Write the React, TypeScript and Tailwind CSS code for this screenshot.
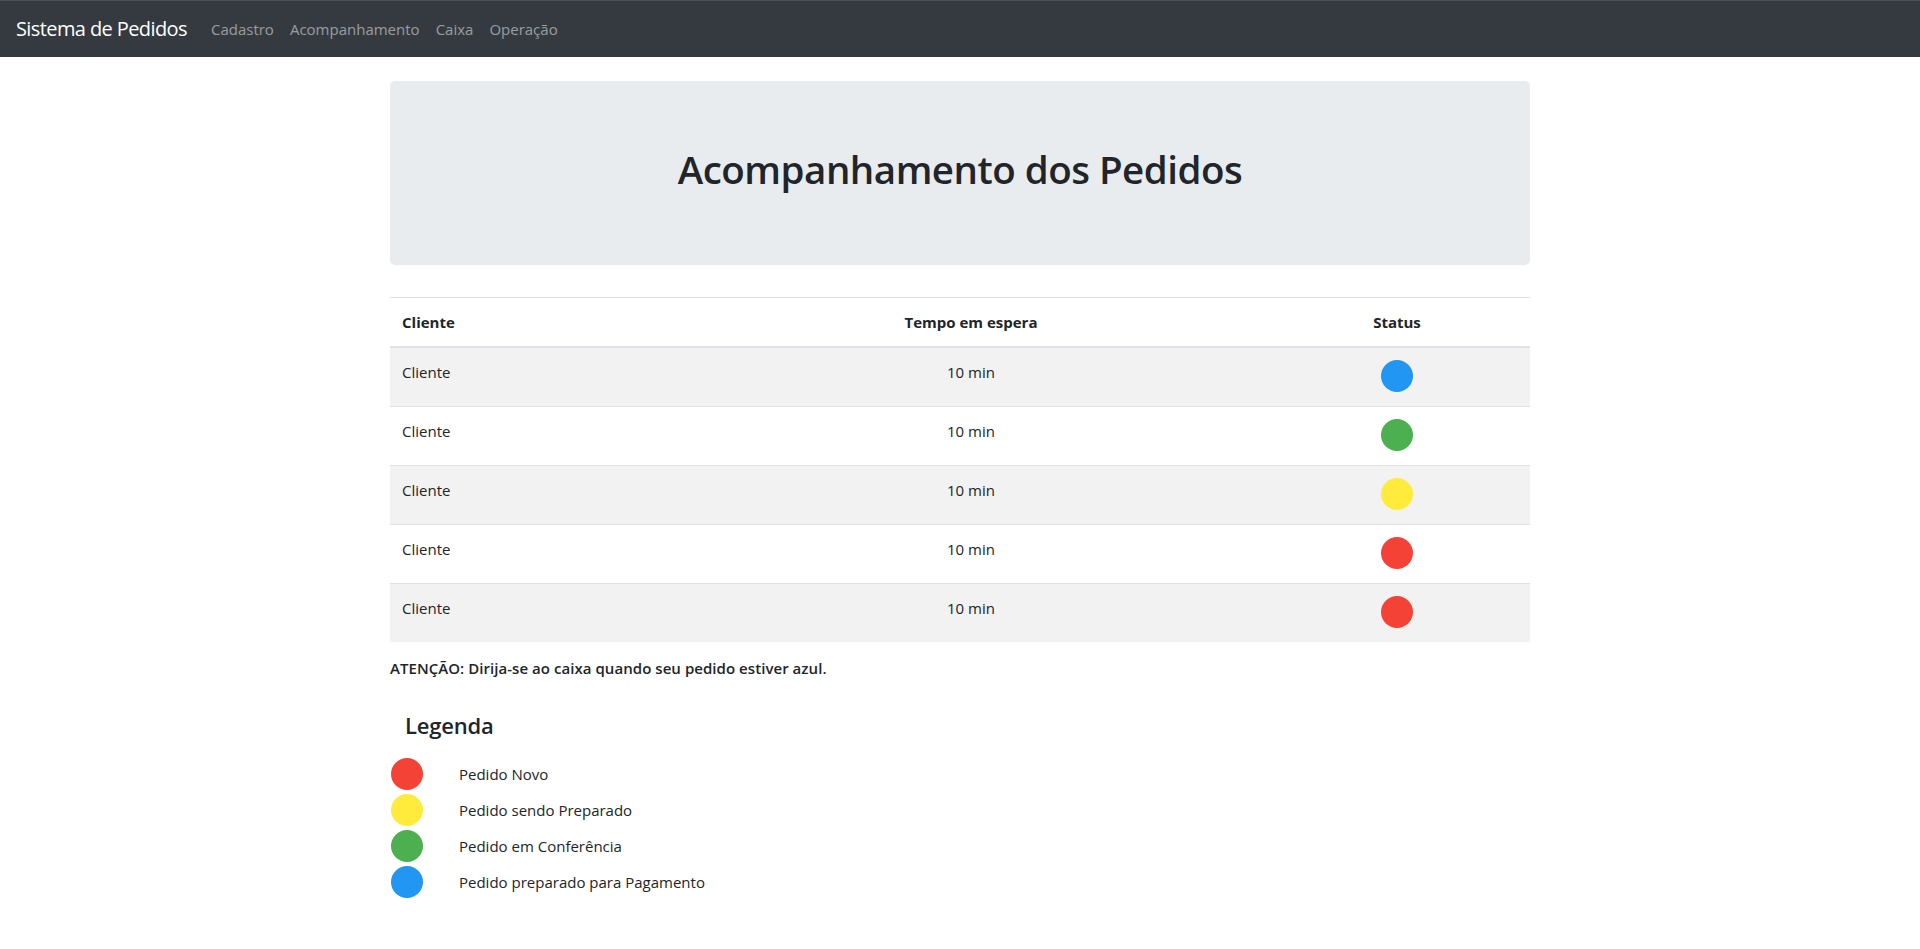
import React from "react";

const pedidos = [
  { cliente: "Cliente", tempo: "10 min", cor: "bg-[#2196f3]" },
  { cliente: "Cliente", tempo: "10 min", cor: "bg-[#4caf50]" },
  { cliente: "Cliente", tempo: "10 min", cor: "bg-[#ffeb3b]" },
  { cliente: "Cliente", tempo: "10 min", cor: "bg-[#f44336]" },
  { cliente: "Cliente", tempo: "10 min", cor: "bg-[#f44336]" },
];

const legenda = [
  { cor: "bg-[#f44336]", texto: "Pedido Novo" },
  { cor: "bg-[#ffeb3b]", texto: "Pedido sendo Preparado" },
  { cor: "bg-[#4caf50]", texto: "Pedido em Conferência" },
  { cor: "bg-[#2196f3]", texto: "Pedido preparado para Pagamento" },
];

const App = () => {
  return (
    <div className="min-h-screen bg-white text-[#212529] font-['Open_Sans',sans-serif]">
      {/* NAVBAR */}
      <nav className="h-[57px] bg-[#343a40] border-t border-[#4a4f55] flex items-center px-4">
        <span className="text-[20px] text-white mr-4 tracking-[-0.6px]">Sistema de Pedidos</span>
        <ul className="flex text-[15px] text-white/50">
          <li className="px-2">Cadastro</li>
          <li className="px-2">Acompanhamento</li>
          <li className="px-2">Caixa</li>
          <li className="px-2">Operação</li>
        </ul>
      </nav>

      <div className="w-[1140px] mx-auto">
        {/* JUMBOTRON */}
        <div className="mt-6 bg-[#e9ecef] rounded-[5px] pt-16 pb-[72px] text-center">
          <h1 className="text-[38.5px] leading-[48px] font-semibold tracking-[-0.5px]">
            Acompanhamento dos Pedidos
          </h1>
        </div>

        {/* TABELA */}
        <table className="w-full mt-8 border-collapse text-[15px]">
          <thead>
            <tr className="border-t border-[#dee2e6]">
              <th className="w-[288px] px-3 py-3 text-left font-bold leading-6 border-b-2 border-[#dee2e6]">
                Cliente
              </th>
              <th className="w-[586px] px-3 py-3 text-center font-bold leading-6 border-b-2 border-[#dee2e6]">
                Tempo em espera
              </th>
              <th className="w-[266px] px-3 py-3 text-center font-bold leading-6 border-b-2 border-[#dee2e6]">
                Status
              </th>
            </tr>
          </thead>
          <tbody>
            {pedidos.map((p, i) => (
              <tr
                key={i}
                className={`border-t border-[#dee2e6] ${i % 2 === 0 ? "bg-[#f2f2f2]" : "bg-white"}`}
              >
                <td className="px-3 py-3 align-top leading-6">{p.cliente}</td>
                <td className="px-3 py-3 align-top leading-6 text-center">{p.tempo}</td>
                <td className="px-3 pt-3 pb-[14px] align-top text-center">
                  <div className="h-8 flex justify-center">
                    <div className={`w-8 h-8 rounded-full ${p.cor}`}></div>
                  </div>
                </td>
              </tr>
            ))}
          </tbody>
        </table>

        {/* AVISO */}
        <p className="mt-[14px] text-[15px] leading-6 font-semibold tracking-[0.05px]">
          ATENÇÃO: Dirija-se ao caixa quando seu pedido estiver azul.
        </p>

        {/* LEGENDA */}
        <h4 className="mt-[31px] pl-[15px] text-[22px] leading-[29px] font-semibold tracking-[-0.2px]">Legenda</h4>
        <div className="mt-[18px] flex flex-col gap-1 pb-12">
          {legenda.map((l, i) => (
            <div key={i} className="flex items-center">
              <div className={`w-8 h-8 rounded-full ml-px ${l.cor}`}></div>
              <span className="ml-9 text-[15px]">{l.texto}</span>
            </div>
          ))}
        </div>
      </div>
    </div>
  );
};

export default App;
